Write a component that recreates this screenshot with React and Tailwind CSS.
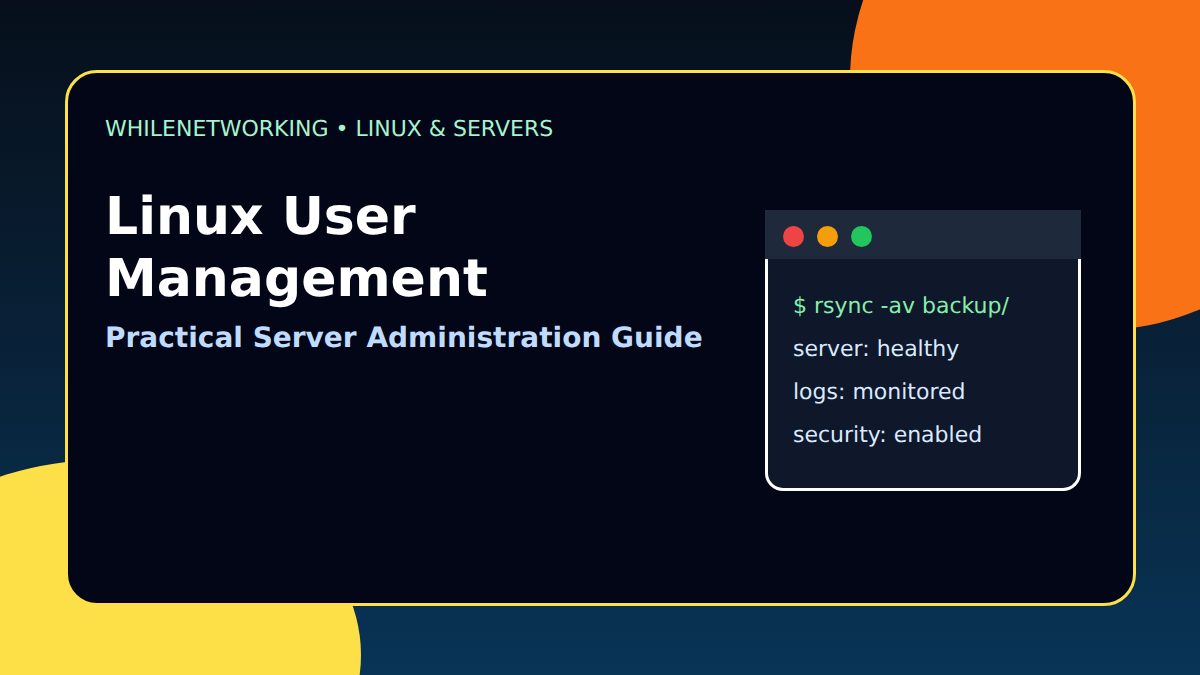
const lines = ["server: healthy", "logs: monitored", "security: enabled"];

const App = () => {
  return (
    <div className="relative w-[1200px] h-[675px] overflow-hidden bg-gradient-to-b from-[#060f1b] to-[#083456] font-['DejaVu_Sans',sans-serif] [text-rendering:geometricPrecision]">
      {/* Background shapes */}
      <div className="absolute left-[850px] top-[-170px] w-[500px] h-[500px] rounded-full bg-[#f97316]" />
      <div className="absolute left-[-153px] top-[460px] w-[514px] h-[390px] rounded-[50%] bg-[#fde047]" />

      <div className="relative pt-[70px] pl-[65px]">
        <div className="flex w-[1071px] h-[536px] border-[3px] border-[#fde047] rounded-[32px] bg-[#020617]">
          {/* Left text */}
          <div className="w-[697px] pl-[37px] pt-[42px]">
            <p className="text-[22px] leading-[30px] text-[#a7f3d0]">WHILENETWORKING • LINUX &amp; SERVERS</p>
            <h1 className="mt-[41px] text-[52px] leading-[62px] font-bold text-white">
              Linux User
              <br />
              Management
            </h1>
            <p className="mt-[10px] text-[28px] leading-[36px] font-bold text-[#bfdbfe]">
              Practical Server Administration Guide
            </p>
          </div>

          {/* Terminal */}
          <div className="mt-[137px] w-[316px]">
            <div className="flex items-start gap-[13px] h-[49px] pl-[18px] pt-[16px] bg-[#1e293b]">
              <span className="w-[21px] h-[21px] rounded-full bg-[#ef4444]" />
              <span className="w-[21px] h-[21px] rounded-full bg-[#f59e0b]" />
              <span className="w-[21px] h-[21px] rounded-full bg-[#22c55e]" />
            </div>
            <div className="h-[232px] pl-[25px] pt-[26px] border-[3px] border-t-0 border-white rounded-b-[18px] bg-[#0f172a] text-[22px] leading-[43px] text-[#dbeafe]">
              <div className="text-[#86efac]">$ rsync -av backup/</div>
              {lines.map((line) => (
                <div key={line}>{line}</div>
              ))}
            </div>
          </div>
        </div>
      </div>
    </div>
  );
};

export default App;
